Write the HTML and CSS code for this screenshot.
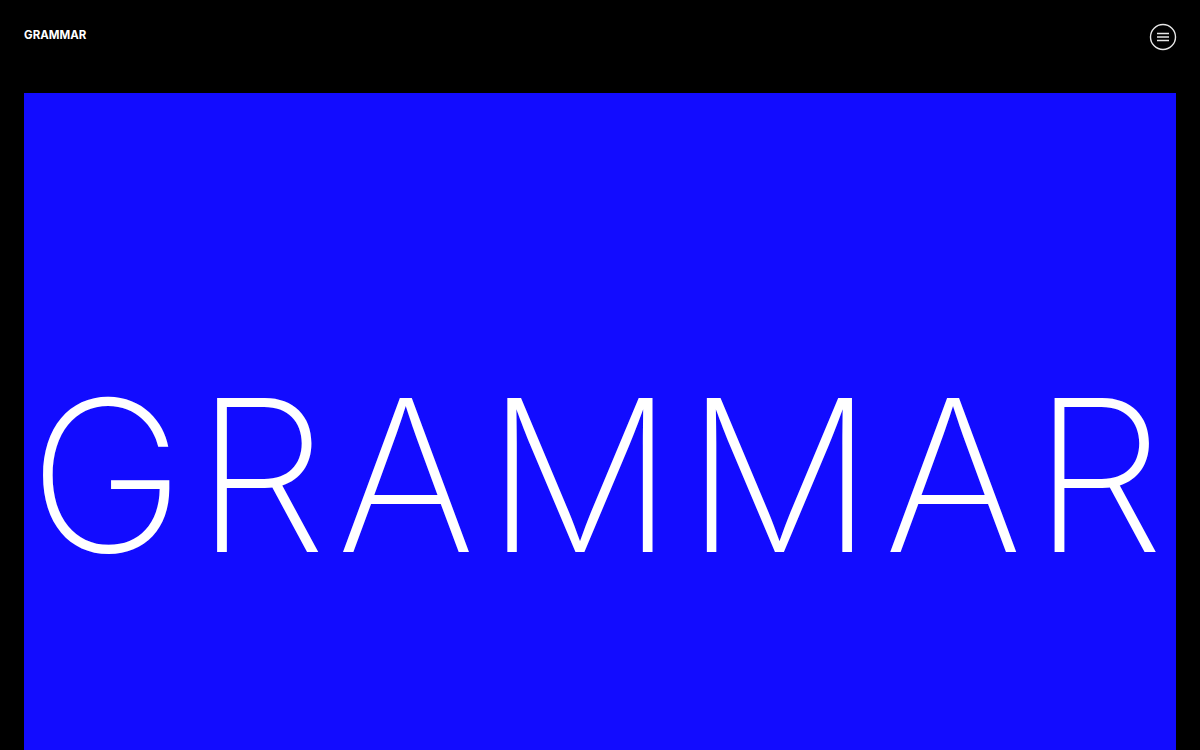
FILE: index.html
```html
<!DOCTYPE html>
<html>
<head>
<meta charset="utf-8">
<link rel="stylesheet" href="styles.css">
</head>
<body>
<header class="header">
  <a class="logo" href="#">GRAMMAR</a>
  <button class="menu" aria-label="Menu">
    <svg width="28" height="28" viewBox="0 0 28 28" fill="none" stroke="#e6e6e6">
      <circle cx="14" cy="14" r="12.5" stroke-width="1.4"/>
      <path d="M8 10.5h12M8 14h12M8 17.5h12" stroke-width="1.4"/>
    </svg>
  </button>
</header>
<main class="hero">
  <h1 class="title">GRAMMAR</h1>
</main>
</body>
</html>
```
FILE: styles.css
```css
html, body {
  margin: 0;
  padding: 0;
  background: #000;
  overflow: hidden;
}
body {
  font-family: Inter, "Liberation Sans", sans-serif;
  color: #fff;
}
.header {
  display: flex;
  justify-content: space-between;
  align-items: center;
  height: 93px;
  padding: 0 24px 20px;
  box-sizing: border-box;
}
.logo {
  color: #fff;
  text-decoration: none;
  font-weight: 700;
  font-size: 11.5px;
  letter-spacing: 0;
  margin-top: -3px;
}
.menu {
  background: none;
  border: 0;
  padding: 0;
  width: 28px;
  height: 28px;
  margin-right: -1px;
  display: block;
}
.menu svg { display: block; }
.hero {
  margin: 0 24px;
  height: 657px;
  box-sizing: border-box;
  padding-top: 108px;
  background: #120cff;
  display: flex;
  align-items: center;
  justify-content: center;
}
.title {
  margin: 0 0 0 3px;
  font-weight: 250;
  font-size: 211px;
  line-height: 1;
  letter-spacing: 10px;
  color: #fff;
}
```
